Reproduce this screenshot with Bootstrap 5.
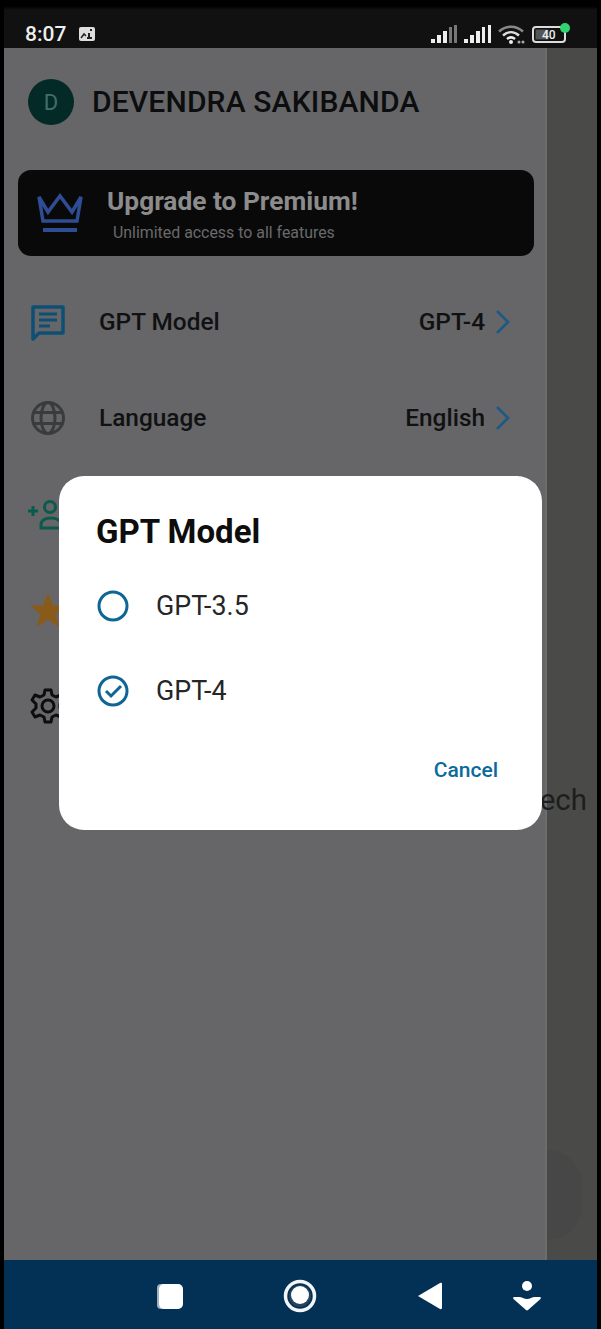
<!DOCTYPE html>
<html lang="en">
<head>
<meta charset="utf-8">
<title>GPT Model</title>
<link rel="stylesheet" href="https://cdn.jsdelivr.net/npm/bootstrap@5.3.0/dist/css/bootstrap.min.css">
<style>
html,body{height:100%;margin:0;background:#000;overflow:hidden}
body{font-family:Roboto,"Liberation Sans",sans-serif;color:#111}
.phone-frame{width:593px;height:1329px;margin-left:4px;position:relative;background:#000}
.status-strip{height:48px;background:linear-gradient(#000 0,#000 6px,#111112 10px);color:#eee;padding:20px 27px 0 21px}
.clock{font-size:21px;line-height:1;font-weight:500}
.gap-12{margin-left:12px}
.gap-6{margin-left:6px}
.gap-7{margin-left:7px}
.stage{height:1212px}
.drawer-pane{width:543px;background:#666567;border-right:2px solid #6c6d6d}
.scrim-pane{width:50px;background:#4a4b49;position:relative}
.drawer-head{height:108px;padding:0 0 0 24px;gap:18px}
.avatar-disc{width:46px;height:46px;background:#042a27;color:#3f7068;font-size:22px}
.user-name{font-size:30px;font-weight:500;color:#0c0d0e;letter-spacing:.15px;line-height:1}
.promo{margin:14px 11px 0 14px;height:86px;background:#09090a;border-radius:13px;padding-left:18px;gap:23px}
.promo-title{font-size:26.3px;font-weight:700;line-height:1;color:#8c8c8d;padding-top:3px}
.promo-sub{font-size:15.9px;line-height:1;color:#6a6a6b;margin:10px 0 0 6px}
.menu-stack{margin-top:18px}
.menu-line{height:96px;padding:0 35px 0 26px;font-size:24.4px;color:#101112;font-weight:500}
.menu-glyph{width:36px;height:36px;flex:none;margin-right:33px;overflow:visible}
.menu-val{margin-right:10px}
.chev{width:15px;height:26px}
.ghost-text{position:absolute;right:10px;top:738px;font-size:29.5px;color:#1d1e1d;line-height:1;white-space:nowrap}
.ghost-fab{position:absolute;left:0;top:1102px;width:35px;height:90px;border-radius:0 46px 46px 0;background:#464746}
.nav-strip{height:69px;background:#023155;padding:3px 0 0 152px}
.nav-home{margin-left:99px}
.nav-back{margin-left:100px}
.nav-assist{margin-left:68px}
.gpt-sheet{position:absolute;left:55px;top:476px;width:483px;height:354px;background:#fff;border-radius:25px;padding:38px 44px 0 37px}
.sheet-title{font-size:33px;font-weight:700;color:#0d0d0d;line-height:36px;margin:0}
.choice{height:84.5px;gap:25px;font-size:26.8px;color:#262626;font-weight:400}
.choice-list{margin-top:14px}
.radio-mark{width:36px;height:36px;flex:none;margin-left:-1px}
.sheet-cancel{font-size:21px;font-weight:500;color:#0b6a9c;line-height:1;margin-top:27px}
.plain-action{padding:0;background:none;border:0}
</style>
</head>
<body>
<div class="phone-frame d-flex flex-column">
  <div class="status-strip d-flex align-items-center justify-content-between">
    <div class="d-flex align-items-center">
      <span class="clock">8:07</span>
      <svg class="gap-12" width="18" height="16" viewBox="0 0 18 16"><rect x="1" y="1" width="16" height="14" rx="2" fill="#dedede"/><path d="M3 12l3-4 2 2" stroke="#222" stroke-width="1.5" fill="none"/><path d="M11 7v6M9 12h5M12 4h2" stroke="#222" stroke-width="2"/></svg>
    </div>
    <div class="d-flex align-items-center">
      <svg width="26" height="20" viewBox="0 0 26 20"><rect x="0" y="15" width="4" height="4" fill="#eee"/><rect x="6" y="11" width="4" height="8" fill="#eee"/><rect x="12" y="7" width="4" height="12" fill="#eee"/><rect x="18" y="3" width="3" height="16" fill="#777"/><rect x="23" y="1" width="3" height="18" fill="#777"/></svg>
      <svg class="gap-7" width="27" height="20" viewBox="0 0 27 20"><rect x="0" y="15" width="4" height="4" fill="#eee"/><rect x="6" y="11" width="4" height="8" fill="#eee"/><rect x="12" y="7" width="4" height="12" fill="#eee"/><rect x="18" y="3" width="3" height="16" fill="#eee"/><rect x="24" y="1" width="3" height="18" fill="#eee"/></svg>
      <svg class="gap-6" width="28" height="20" viewBox="0 0 28 20" fill="none"><path d="M2 7.5C9 1 19 1 26 7.5" stroke="#888" stroke-width="2.5"/><path d="M6 11.5C11 7 17 7 22 11.5" stroke="#ddd" stroke-width="2.5"/><path d="M10 15C12.5 13 15.5 13 18 15" stroke="#eee" stroke-width="2.5"/><circle cx="14" cy="18" r="2" fill="#eee"/><circle cx="22" cy="18" r="1.5" fill="#aaa"/><circle cx="26" cy="18" r="1.5" fill="#aaa"/></svg>
      <svg class="gap-7" width="38" height="22" viewBox="0 0 38 22"><rect x="1" y="4" width="32" height="15" rx="3" fill="#111" stroke="#ddd" stroke-width="2"/><rect x="3.5" y="6.5" width="13" height="10" fill="#555"/><text x="10" y="16" font-family="Roboto,sans-serif" font-size="12" font-weight="500" fill="#eee">40</text><circle cx="33" cy="5" r="5" fill="#2fd36f"/></svg>
    </div>
  </div>

  <div class="stage d-flex">
    <div class="drawer-pane">
      <div class="drawer-head d-flex align-items-center">
        <div class="avatar-disc rounded-circle d-flex align-items-center justify-content-center">D</div>
        <div class="user-name">DEVENDRA SAKIBANDA</div>
      </div>
      <div class="promo d-flex align-items-center">
        <svg width="48" height="42" viewBox="0 0 48 42" fill="none" stroke="#2f4d95" stroke-width="3.5"><path d="M3 5l9 15 12-16 12 16 9-15-4 24H7z"/><path d="M7 38h34" stroke-width="4"/></svg>
        <div>
          <div class="promo-title">Upgrade to Premium!</div>
          <div class="promo-sub">Unlimited access to all features</div>
        </div>
      </div>
      <div class="menu-stack">
        <div class="menu-line d-flex align-items-center">
          <svg class="menu-glyph" viewBox="0 0 36 36" fill="none"><path d="M3 3h30v26H9l-6 6z" stroke="#0e4f75" stroke-width="3.5" stroke-linejoin="round"/><path d="M9 10h18M9 16h18M9 22h11" stroke="#0e4f75" stroke-width="3"/></svg>
          <span>GPT Model</span>
          <span class="ms-auto menu-val">GPT-4</span>
          <svg class="chev" viewBox="0 0 15 26" fill="none"><path d="M2 2l11 11L2 24" stroke="#1b5a86" stroke-width="2.5"/></svg>
        </div>
        <div class="menu-line d-flex align-items-center">
          <svg class="menu-glyph" viewBox="0 0 36 36" fill="none" stroke="#3a3b3d" stroke-width="3"><circle cx="18" cy="18" r="15.5"/><ellipse cx="18" cy="18" rx="7" ry="15.5"/><path d="M3 12.5h30M3 23.5h30"/></svg>
          <span>Language</span>
          <span class="ms-auto menu-val">English</span>
          <svg class="chev" viewBox="0 0 15 26" fill="none"><path d="M2 2l11 11L2 24" stroke="#1b5a86" stroke-width="2.5"/></svg>
        </div>
        <div class="menu-line d-flex align-items-center">
          <svg class="menu-glyph" viewBox="0 0 36 36" fill="none" stroke="#0a5a4e" stroke-width="3"><path d="M-2 15H8M3 10v10"/><circle cx="20" cy="11" r="5.5"/><path d="M11 32v-3c0-5 5-7 10-7s10 2 10 7v3z"/></svg>
        </div>
        <div class="menu-line d-flex align-items-center">
          <svg class="menu-glyph" viewBox="0 0 36 36"><path d="M18 1l5 12.5h13l-10.5 8.5 4 13L18 27.5 6.500 35l4-13L0 13.500h13z" fill="#8a5a18"/></svg>
        </div>
        <div class="menu-line d-flex align-items-center">
          <svg class="menu-glyph" viewBox="0 0 36 36" fill="none" stroke="#0d0d0d" stroke-width="3" stroke-linejoin="round"><circle cx="18" cy="18" r="6"/><path d="M15 2h6l1 5 4 2 5-2 3 5-4 4v4l4 4-3 5-5-2-4 2-1 5h-6l-1-5-4-2-5 2-3-5 4-4v-4l-4-4 3-5 5 2 4-2z"/></svg>
        </div>
      </div>
    </div>
    <div class="scrim-pane">
      <div class="ghost-text">ech</div>
      <div class="ghost-fab"></div>
    </div>
  </div>

  <div class="nav-strip d-flex align-items-center">
    <svg width="28" height="28" viewBox="0 0 28 28"><rect x="1" y="2" width="24" height="25" rx="4" fill="#9fb2c2"/><rect x="3" y="2" width="24" height="25" rx="5" fill="#fff"/></svg>
    <svg class="nav-home" width="34" height="34" viewBox="0 0 34 34"><circle cx="17" cy="17" r="14.5" fill="none" stroke="#f2f4f6" stroke-width="3.5"/><circle cx="17" cy="17" r="11" fill="#27425a"/><circle cx="17" cy="16" r="9" fill="#fff"/></svg>
    <svg class="nav-back" width="28" height="30" viewBox="0 0 28 30"><path d="M1 15L23 2c1-.5 2 0 2 1v24c0 1-1 1.5-2 1z" fill="#fff"/></svg>
    <svg class="nav-assist" width="28" height="32" viewBox="0 0 28 32"><circle cx="14" cy="6" r="5" fill="#fff"/><path d="M1 17h5c3 0 5 2 8 2s5-2 8-2h5c1 0 1 1 .5 2L15 30c-.5.5-1.500.5-2 0L.5 19C0 18 0 17 1 17z" fill="#fff"/></svg>
  </div>

  <div class="gpt-sheet">
    <h2 class="sheet-title">GPT Model</h2>
    <div class="choice-list">
      <div class="choice d-flex align-items-center">
        <svg class="radio-mark" viewBox="0 0 36 36" fill="none"><circle cx="18" cy="18" r="14" stroke="#0e6596" stroke-width="3"/></svg>
        <span>GPT-3.5</span>
      </div>
      <div class="choice d-flex align-items-center">
        <svg class="radio-mark" viewBox="0 0 36 36" fill="none"><circle cx="18" cy="18" r="14" stroke="#0e6596" stroke-width="3"/><path d="M11 18l5 5 10-10" stroke="#0e6596" stroke-width="3"/></svg>
        <span>GPT-4</span>
      </div>
    </div>
    <div class="d-flex justify-content-end">
      <button type="button" class="plain-action sheet-cancel">Cancel</button>
    </div>
  </div>
</div>
</body>
</html>
